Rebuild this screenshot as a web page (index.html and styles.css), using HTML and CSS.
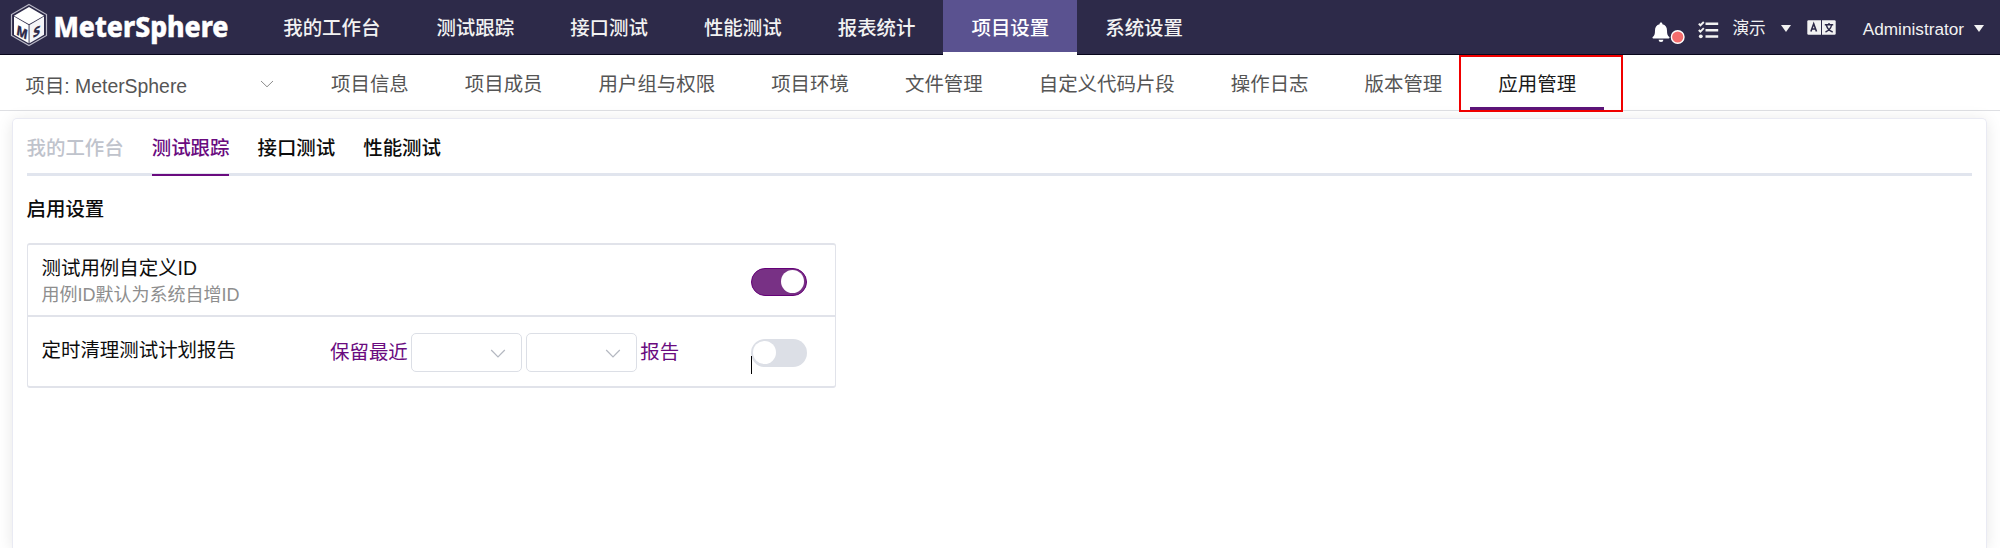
FILE: index.html
```html
<!DOCTYPE html>
<html lang="zh-CN">
<head>
<meta charset="utf-8">
<title>MeterSphere</title>
<link rel="stylesheet" href="styles.css">
</head>
<body>
<header class="topbar">
  <svg class="logo" width="240" height="54" viewBox="0 0 240 54">
    <path d="M29 4.500L46.500 14.500V35.500L29 45.500L11.500 35.500V14.500Z" fill="none" stroke="#b9b8c6" stroke-width="1.200"/>
    <path d="M29 7L44 15.700L29 24.200L14 15.700Z" fill="#fff"/>
    <path d="M14 16.600L28.600 25V43.300L14 34.700Z" fill="#fff"/>
    <path d="M44 16.600L29.500 25V43.300L44 34.700Z" fill="#f4f4f7"/>
    <text class="cube-letter" transform="matrix(.87 .45 -.15 1 16 34.200)">M</text>
    <text class="cube-letter" transform="matrix(.95 -.5 -.1 1 32.800 38)">S</text>
    <text class="wordmark" x="53.500" y="36.500" textLength="175" lengthAdjust="spacingAndGlyphs">MeterSphere</text>
  </svg>
  <nav class="menu main-menu">
    <a class="item">我的工作台</a>
    <a class="item">测试跟踪</a>
    <a class="item">接口测试</a>
    <a class="item">性能测试</a>
    <a class="item">报表统计</a>
    <a class="item current">项目设置</a>
    <a class="item">系统设置</a>
  </nav>
  <div class="tools">
    <svg class="bell" width="34" height="26" viewBox="0 0 34 26">
      <path d="M9 1.500c1 0 1.400.7 1.400 1.700 3.200.8 4.600 3 4.600 6.300 0 3.700.7 5.200 2.300 6.600.5.500.2 1.400-.6 1.400H1.300c-.8 0-1.100-.9-.6-1.400C2.300 14.700 3 13.200 3 9.500 3 6.200 4.400 4 7.600 3.200 7.600 2.200 8 1.500 9 1.500Z" fill="#fff"/>
      <path d="M6.600 18.700h4.800a2.400 2.400 0 0 1-4.800 0Z" fill="#fff"/>
      <circle cx="25.700" cy="16" r="6.300" fill="#f56c6c" stroke="#fff" stroke-width="1.400"/>
    </svg>
    <svg class="tasks" width="21" height="18" viewBox="0 0 21 18" fill="none" stroke="#f2f2f2">
      <path d="M7.500 2.800H20.200M7.500 9.200H20.200M7.500 15.400H20.200" stroke-width="2.500"/>
      <path d="M.8 2.700L2.400 4.300L5.800 1M.8 9L2.400 10.600L5.800 7.200" stroke-width="1.900"/>
      <circle cx="2.800" cy="15.300" r="1.900" fill="#f2f2f2" stroke="none"/>
    </svg>
    <span class="workspace">演示</span>
    <i class="triangle"></i>
    <svg class="language" width="29" height="15" viewBox="0 0 29 15">
      <rect x=".3" y=".3" width="28.400" height="14.400" rx="1.200" fill="#f2f2f2"/>
      <path d="M14.500 0V15" stroke="#2d2a49"/>
      <path d="M3.900 11.500L6.700 3.800L9.500 11.500M4.900 9H8.500" fill="none" stroke="#2d2a49" stroke-width="1.600"/>
      <path d="M17.800 4.700H26.200M22 2.900V4.700M24.600 5.200C23.800 8.500 21.500 10.800 18.500 12M19.400 5.200C20.300 8.500 22.500 10.800 25.700 12" fill="none" stroke="#2d2a49" stroke-width="1.400"/>
    </svg>
    <span class="user">Administrator</span>
    <i class="triangle"></i>
  </div>
</header>

<div class="subbar">
  <div class="project">
    <span>项目: MeterSphere</span>
    <svg width="14" height="8" viewBox="0 0 14 8" fill="none" stroke="#8d8d8d"><path d="M1 1L7 6.800L13 1"/></svg>
  </div>
  <nav class="menu sub-menu">
    <a class="item">项目信息</a>
    <a class="item">项目成员</a>
    <a class="item">用户组与权限</a>
    <a class="item">项目环境</a>
    <a class="item">文件管理</a>
    <a class="item">自定义代码片段</a>
    <a class="item">操作日志</a>
    <a class="item">版本管理</a>
    <a class="item current">应用管理<b class="marker"></b></a>
  </nav>
</div>

<main class="card">
  <div class="tabs">
    <span class="tab disabled">我的工作台</span>
    <span class="tab active">测试跟踪</span>
    <span class="tab">接口测试</span>
    <span class="tab">性能测试</span>
  </div>
  <h2 class="section-title">启用设置</h2>
  <section class="settings">
    <div class="row">
      <div class="label">
        <div>测试用例自定义ID</div>
        <div class="hint">用例ID默认为系统自增ID</div>
      </div>
      <span class="switch on"></span>
    </div>
    <div class="row">
      <div class="label single">定时清理测试计划报告</div>
      <div class="keep">
        <span class="keep-text">保留最近</span>
        <span class="select"><svg width="16" height="10" viewBox="0 0 16 10" fill="none" stroke="#b4b8c1" stroke-width="1.200"><path d="M1.200 1L8 8L14.800 1"/></svg></span>
        <span class="select"><svg width="16" height="10" viewBox="0 0 16 10" fill="none" stroke="#b4b8c1" stroke-width="1.200"><path d="M1.200 1L8 8L14.800 1"/></svg></span>
        <span class="keep-text">报告</span>
      </div>
      <span class="switch"><i class="cursor"></i></span>
    </div>
  </section>
</main>
</body>
</html>
```
FILE: styles.css
```css
* { box-sizing: border-box; }
body {
  margin: 0;
  height: 548px;
  overflow: hidden;
  display: flex;
  flex-direction: column;
  background: #fff;
  color: #0c0c0c;
  font: 19.450px/28px "Liberation Sans", "Noto Sans CJK SC", sans-serif;
}
.topbar {
  flex: none;
  height: 55px;
  display: flex;
  background: #2d2a49;
  border-bottom: 1px solid #08061c;
}
.logo { flex: none; margin-right: 15.200px; }
.wordmark { font: 800 27.500px "Noto Sans", sans-serif; fill: #fff; stroke: #fff; stroke-width: .5px; }
.cube-letter { font: 800 13px "Noto Sans", sans-serif; fill: #2d2a49; stroke: #2d2a49; stroke-width: .3px; }
.menu { display: flex; }
.item { padding: 0 28px; white-space: nowrap; }
.main-menu .item { height: 55px; line-height: 57px; color: #f2f2f2; font-weight: 500; }
.main-menu .current {
  background: #5a5290;
  border-bottom: 3px solid #fff;
  color: #fff;
}
.tools { margin-left: auto; display: flex; align-items: flex-start; color: #f2f2f2; padding-right: 16px; }
.bell { margin: 21px 12px 0 0; }
.tasks { margin: 21px 13px 0 0; }
.workspace { font-size: 16.700px; margin: 15px 15px 0 0; }
.triangle {
  margin-top: 25px;
  border: solid transparent;
  border-width: 7px 5.500px 0;
  border-top-color: #f2f2f2;
}
.language { margin: 20px 27px 0 16px; }
.user { font-size: 17.200px; margin: 15px 10px 0 0; }

.subbar {
  flex: none;
  height: 56px;
  display: flex;
  border-bottom: 1px solid #dedfe3;
  color: #555;
}
.project { flex: none; width: 303px; padding: 17px 29px 0 25.500px; display: flex; justify-content: space-between; }
.project span { font-size: 19.400px; }
.project svg { margin-top: 8px; }
.sub-menu .item { height: 55px; line-height: 58px; }
.sub-menu .current { position: relative; color: #1a1a1a; border-bottom: 3px solid #5c1478; }
.marker { position: absolute; left: -11px; top: 0; width: 164px; height: 57px; border: 2px solid #f00000; }

.card {
  flex: 1;
  margin: 7px 13px 0 12px;
  padding: 12px 14px 0 13.500px;
  border: 1px solid #e9eaf3;
  border-bottom: 0;
  border-radius: 5px 5px 0 0;
  box-shadow: 0 2px 16px rgba(0, 0, 0, .1);
}
.tabs { display: flex; gap: 28px; height: 45px; font-weight: 500; box-shadow: inset 0 -3px #e1e5ee; line-height: 34px; }
.tab { height: 45px; }
.tab.active { color: #6a0b7f; border-bottom: 2px solid #6a0b7f; }
.disabled { color: #bfc3cc; }
.section-title { margin: 19px 0 20px; font: inherit; font-weight: 500; }
.settings { width: 809px; border: 2px solid #e1e3ea; border-left-width: 1px; border-right-width: 1px; border-radius: 3px; }
.row { display: flex; height: 70px; padding: 3px 28px 0 14px; align-items: center; }
.row + .row { border-top: 2px solid #e1e3ea; height: 71px; padding-top: 2px; }
.label { flex: none; width: 288.500px; line-height: 27px; }
.single { padding-bottom: 5px; }
.hint { color: #8e8e8e; font-size: 18px; }
.keep { display: flex; align-items: center; color: #6a0b7f; gap: 3.500px; }
.keep-text { padding-bottom: 2px; }
.select { width: 111px; height: 39px; border: 1.500px solid #dcdfe6; border-radius: 5px; display: flex; align-items: center; justify-content: flex-end; padding: 2px 15px 0 0; }
.switch { position: relative; margin-left: auto; width: 56px; height: 28px; border-radius: 14px; background: #dcdfe6; }
.switch::after { content: ""; display: block; width: 23px; height: 23px; margin: 2.500px; border-radius: 50%; background: #fff; }
.switch.on { background: #783185; border: 1.500px solid #650078; }
.switch.on::after { margin: 1px 1px 1px 29px; }
.cursor { position: absolute; left: 0; top: 17px; width: 1px; height: 18px; background: #000; }
```
